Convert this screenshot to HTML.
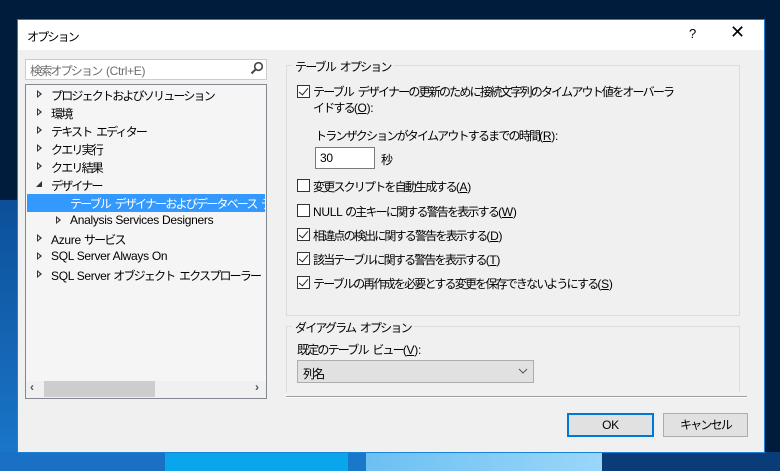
<!DOCTYPE html>
<html><head><meta charset="utf-8"><style>
*{margin:0;padding:0;box-sizing:border-box}
body{width:780px;height:471px;overflow:hidden;position:relative;background:#001c3c;font-family:"Liberation Sans","Noto Sans CJK JP",sans-serif;font-size:12px;color:#000;letter-spacing:-1.8px;word-spacing:3px}
.a{position:absolute;white-space:nowrap}
.l{letter-spacing:-0.3px;word-spacing:0}
.dlg{left:17px;top:19px;width:748px;height:434px;background:#f0f0f0;border:1px solid #1883d7}
.tb{left:0;top:0;width:746px;height:30px;background:#fff}
.cb{position:absolute;width:13px;height:13px;border:1px solid #333;background:#fff}
.cb.c::after{content:"";position:absolute;left:3px;top:0px;width:4px;height:8px;border:solid #222;border-width:0 1.5px 1.5px 0;transform:rotate(40deg)}
.tri{position:absolute;width:0;height:0;border-top:4px solid transparent;border-bottom:4px solid transparent;border-left:5px solid #333}
.tri::after{content:"";position:absolute;left:-4px;top:-2px;border-top:2px solid transparent;border-bottom:2px solid transparent;border-left:2.5px solid #f5f5f5}
.u{text-decoration:underline}
.clip{position:absolute;left:26px;top:85px;width:240px;height:296px;overflow:hidden}
.clip .a,.clip .tri{margin-left:-26px;margin-top:-85px}
</style></head><body>
<div class="a" style="left:0;top:200px;width:17px;height:271px;background:linear-gradient(#0c4f98,#1b78cc)"></div>
<div class="a" style="left:0;top:452px;width:165px;height:19px;background:#1a70c4"></div>
<div class="a" style="left:165px;top:452px;width:183px;height:19px;background:#0aa6ec"></div>
<div class="a" style="left:348px;top:452px;width:18px;height:19px;background:#1a78c8"></div>
<div class="a" style="left:366px;top:452px;width:236px;height:19px;background:linear-gradient(90deg,#6cc0f2,#9ad6fa)"></div>
<div class="a" style="left:602px;top:452px;width:178px;height:19px;background:#0a3c78"></div>
<div class="a dlg">
 <div class="a tb"></div>
 <div class="a" style="left:9px;top:8px">オプション</div>
 <div class="a" style="left:671px;top:6px;font-size:13px">?</div>
 <div class="a" style="left:712px;top:2px;font-size:18px;font-weight:300">✕</div>
</div>
<div class="a" style="left:25px;top:59px;width:242px;height:21px;background:#fff;border:1px solid #ccc"></div>
<div class="a" style="left:30px;top:62px;color:#6d6d6d">検索オプション <span class="l">(Ctrl+E)</span></div>
<svg class="a" style="left:250px;top:61px" width="14" height="14"><circle cx="8.5" cy="5.5" r="3.8" fill="none" stroke="#444" stroke-width="1.6"/><line x1="5.7" y1="8.3" x2="1.5" y2="12.5" stroke="#444" stroke-width="2"/></svg>
<div class="a" style="left:25px;top:84px;width:242px;height:315px;background:#f5f5f5;border:1px solid #828790"></div>
<div class="clip">
<div class="a" style="left:27px;top:194px;width:238px;height:18px;background:#3399ff"></div>
<div class="tri" style="left:37px;top:90px"></div><div class="a" style="left:51px;top:87px">プロジェクトおよびソリューション</div>
<div class="tri" style="left:37px;top:108px"></div><div class="a" style="left:51px;top:105px">環境</div>
<div class="tri" style="left:37px;top:126px"></div><div class="a" style="left:51px;top:123px">テキスト エディター</div>
<div class="tri" style="left:37px;top:144px"></div><div class="a" style="left:51px;top:141px">クエリ実行</div>
<div class="tri" style="left:37px;top:162px"></div><div class="a" style="left:51px;top:159px">クエリ結果</div>
<div class="a" style="left:36px;top:181px;width:0;height:0;border-left:6px solid transparent;border-bottom:6px solid #333"></div><div class="a" style="left:51px;top:177px">デザイナー</div>
<div class="a" style="left:70px;top:195px;color:#fff">テーブル デザイナーおよびデータベース デザイナー</div>
<div class="tri" style="left:56px;top:216px"></div><div class="a l" style="left:70px;top:213px">Analysis Services Designers</div>
<div class="tri" style="left:37px;top:234px"></div><div class="a" style="left:51px;top:231px"><span class="l">Azure </span>サービス</div>
<div class="tri" style="left:37px;top:252px"></div><div class="a l" style="left:51px;top:249px">SQL Server Always On</div>
<div class="tri" style="left:37px;top:270px"></div><div class="a" style="left:51px;top:267px"><span class="l">SQL Server </span>オブジェクト エクスプローラー</div>
</div>
<div class="a" style="left:26px;top:381px;width:240px;height:17px;background:#f0f0f0"></div>
<div class="a" style="left:44px;top:381px;width:111px;height:16px;background:#cdcdcd"></div>
<div class="a" style="left:30px;top:380px;color:#555;font-weight:bold">‹</div>
<div class="a" style="left:255px;top:380px;color:#555;font-weight:bold">›</div>
<div class="a" style="left:286px;top:65px;width:454px;height:251px;border:1px solid #dcdcdc"></div>
<div class="a" style="left:292px;top:58px;background:#f0f0f0;padding:0 3px">テーブル オプション</div>
<div class="cb c" style="left:297px;top:85px"></div>
<div class="a" style="left:313px;top:84px;line-height:16px">テーブル デザイナーの更新のために接続文字列のタイムアウト値をオーバーラ<br>イドする<span class="l">(<span class="u">O</span>):</span></div>
<div class="a" style="left:315px;top:127px">トランザクションがタイムアウトするまでの時間<span class="l">(<span class="u">R</span>):</span></div>
<div class="a l" style="left:315px;top:147px;width:60px;height:22px;background:#fff;border:1px solid #7a7a7a;padding:3px 4px">30</div>
<div class="a" style="left:381px;top:151px">秒</div>
<div class="cb" style="left:297px;top:179px"></div><div class="a" style="left:313px;top:178px">変更スクリプトを自動生成する<span class="l">(<span class="u">A</span>)</span></div>
<div class="cb" style="left:297px;top:204px"></div><div class="a" style="left:313px;top:203px"><span class="l">NULL </span>の主キーに関する警告を表示する<span class="l">(<span class="u">W</span>)</span></div>
<div class="cb c" style="left:297px;top:228px"></div><div class="a" style="left:313px;top:227px">相違点の検出に関する警告を表示する<span class="l">(<span class="u">D</span>)</span></div>
<div class="cb c" style="left:297px;top:252px"></div><div class="a" style="left:313px;top:251px">該当テーブルに関する警告を表示する<span class="l">(<span class="u">T</span>)</span></div>
<div class="cb c" style="left:297px;top:276px"></div><div class="a" style="left:313px;top:275px">テーブルの再作成を必要とする変更を保存できないようにする<span class="l">(<span class="u">S</span>)</span></div>
<div class="a" style="left:286px;top:326px;width:454px;height:66px;border:1px solid #dcdcdc;border-bottom:none"></div>
<div class="a" style="left:292px;top:319px;background:#f0f0f0;padding:0 3px">ダイアグラム オプション</div>
<div class="a" style="left:297px;top:341px">既定のテーブル ビュー<span class="l">(<span class="u">V</span>):</span></div>
<div class="a" style="left:297px;top:360px;width:237px;height:23px;background:#e1e1e1;border:1px solid #adadad;padding:4px 5px">列名</div>
<svg class="a" style="left:518px;top:368px" width="10" height="7"><polyline points="1,1 5,5 9,1" fill="none" stroke="#555" stroke-width="1"/></svg>
<div class="a" style="left:286px;top:396px;width:461px;height:2px;background:#a0a0a0;border-bottom:1px solid #fff"></div>
<div class="a l" style="left:567px;top:413px;width:87px;height:24px;background:#e1e1e1;border:2px solid #0078d7;text-align:center;line-height:20px">OK</div>
<div class="a" style="left:663px;top:413px;width:85px;height:24px;background:#e1e1e1;border:1px solid #adadad;text-align:center;line-height:22px">キャンセル</div>
</body></html>
